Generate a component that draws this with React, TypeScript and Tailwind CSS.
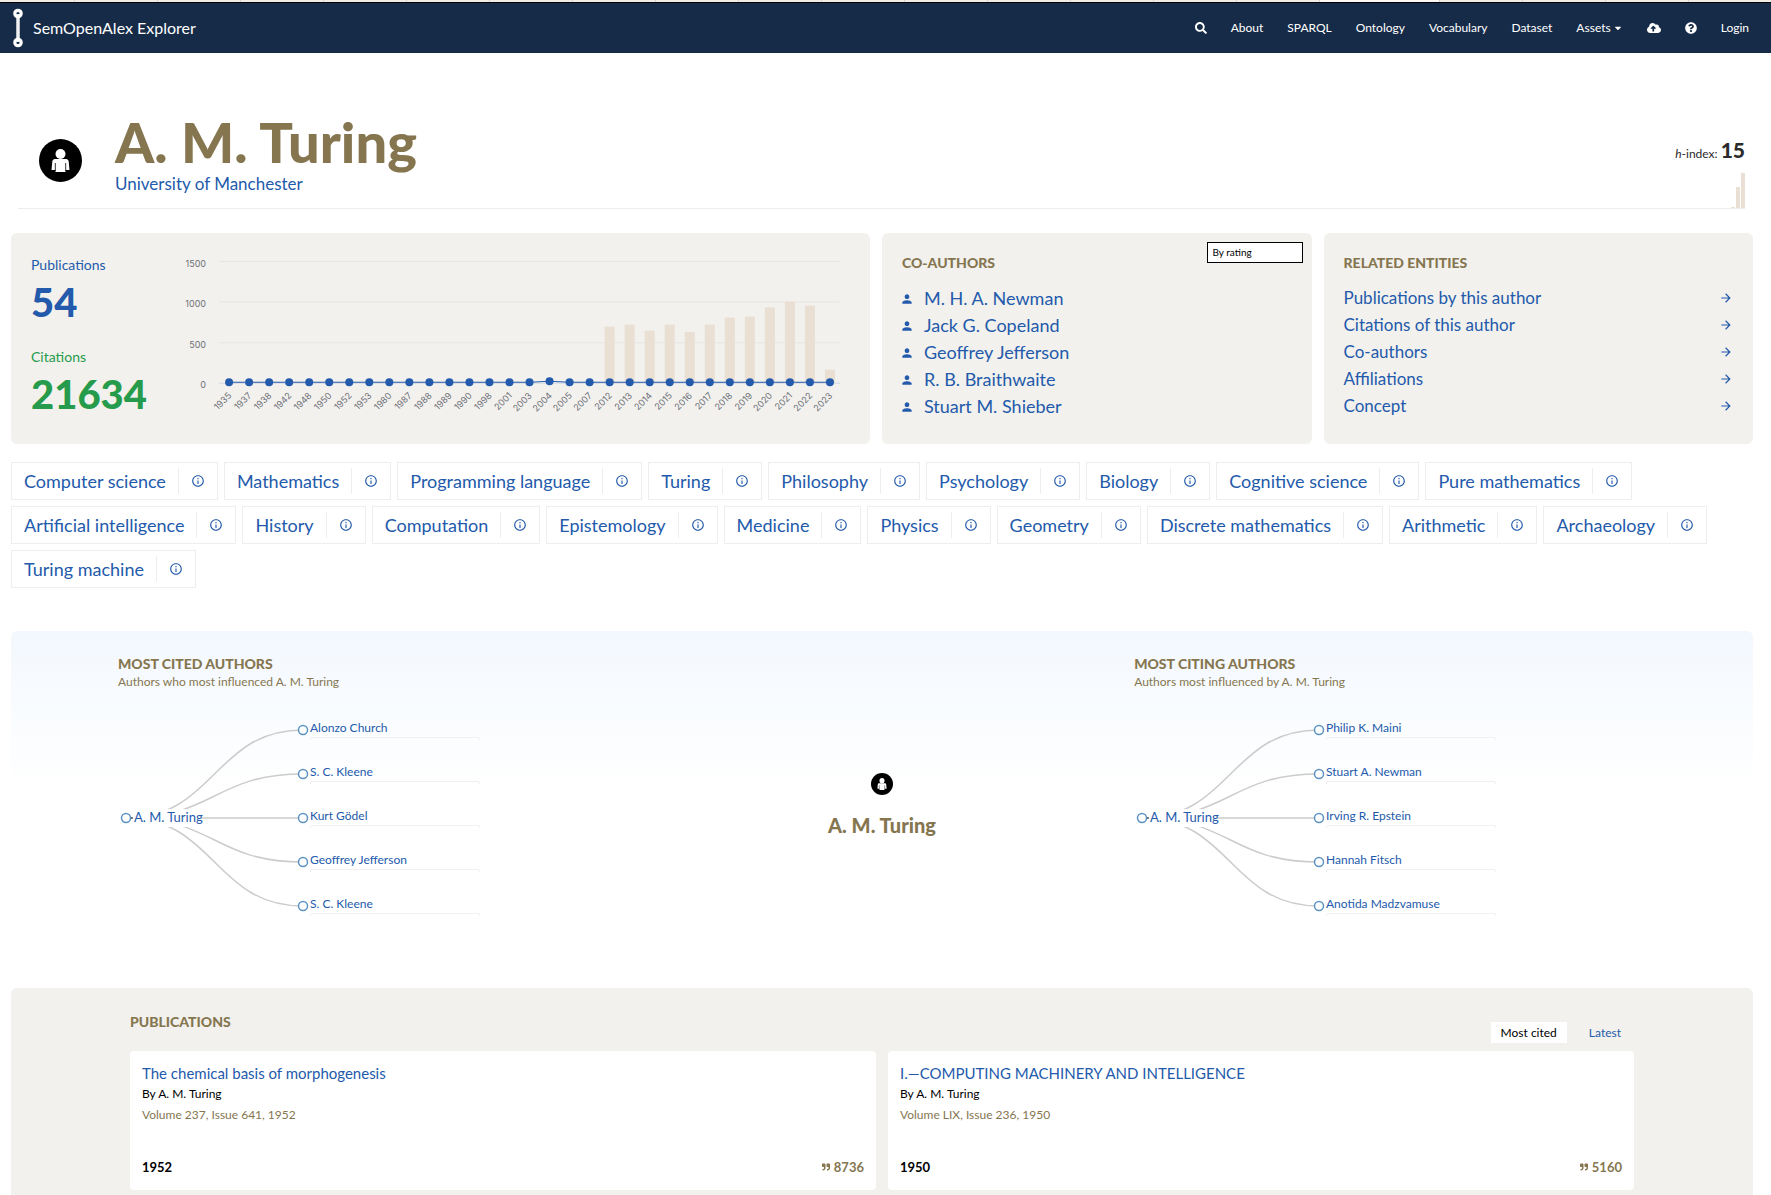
import { useState } from 'react'
import {
  FaCaretDown,
  FaCloudUploadAlt,
  FaQuestionCircle,
  FaQuoteRight,
  FaSearch,
} from 'react-icons/fa'
import { MdArrowForward, MdInfoOutline, MdPerson } from 'react-icons/md'

interface YearData {
  year: number
  publications: number
  citations: number
}

interface Publication {
  title: string
  author: string
  issue: string
  year: number
  citations: number
}

const AUTHOR = 'A. M. Turing'

const earlyYears = [
  1935, 1937, 1938, 1942, 1948, 1950, 1952, 1953, 1980, 1987, 1988, 1989, 1990,
  1998, 2001, 2003, 2004, 2005, 2007,
]
const citationsFrom2012 = [
  697, 722, 648, 722, 632, 722, 809, 821, 936, 1006, 957, 167,
]

const chartData: YearData[] = [
  ...earlyYears.map((year) => ({
    year,
    publications: year === 2004 ? 25 : 12,
    citations: 0,
  })),
  ...citationsFrom2012.map((citations, i) => ({
    year: 2012 + i,
    publications: 12,
    citations,
  })),
]

const coAuthors = [
  'M. H. A. Newman',
  'Jack G. Copeland',
  'Geoffrey Jefferson',
  'R. B. Braithwaite',
  'Stuart M. Shieber',
]

const relatedEntities = [
  'Publications by this author',
  'Citations of this author',
  'Co-authors',
  'Affiliations',
  'Concept',
]

const concepts = [
  'Computer science',
  'Mathematics',
  'Programming language',
  'Turing',
  'Philosophy',
  'Psychology',
  'Biology',
  'Cognitive science',
  'Pure mathematics',
  'Artificial intelligence',
  'History',
  'Computation',
  'Epistemology',
  'Medicine',
  'Physics',
  'Geometry',
  'Discrete mathematics',
  'Arithmetic',
  'Archaeology',
  'Turing machine',
]

const mostCited = [
  'Alonzo Church',
  'S. C. Kleene',
  'Kurt Gödel',
  'Geoffrey Jefferson',
  'S. C. Kleene',
]

const mostCiting = [
  'Philip K. Maini',
  'Stuart A. Newman',
  'Irving R. Epstein',
  'Hannah Fitsch',
  'Anotida Madzvamuse',
]

const publications: Publication[] = [
  {
    title: 'The chemical basis of morphogenesis',
    author: AUTHOR,
    issue: 'Volume 237, Issue 641, 1952',
    year: 1952,
    citations: 8736,
  },
  {
    title: 'I.—COMPUTING MACHINERY AND INTELLIGENCE',
    author: AUTHOR,
    issue: 'Volume LIX, Issue 236, 1950',
    year: 1950,
    citations: 5160,
  },
]

const PersonBadge = ({ className }: { className: string }) => (
  <svg viewBox="0 0 43 43" className={className} aria-hidden="true">
    <circle cx="21.5" cy="21.5" r="21.5" fill="#000" />
    <circle cx="21.5" cy="15" r="5" fill="#fff" />
    <path
      d="M16 20h11c1.500 0 2.500 1 2.700 2.500l.8 8.500h-4v2h-10v-2h-4l.8-8.500C13.500 21 14.500 20 16 20z"
      fill="#fff"
    />
    <path d="M16.300 24v8M26.700 24v8" stroke="#000" strokeWidth=".8" />
  </svg>
)

// Sliver of the tab strip above the navbar
const TabStrip = () => (
  <div className="flex h-0.5 bg-[#efebe7]">
    <div className="w-[75px] border-r border-[#d6d3d0]" />
    {Array.from({ length: 15 }, (_, i) => (
      <div key={i} className="flex-1 border-r border-[#d6d3d0]" />
    ))}
    <div className="w-[120px] border-r border-[#d6d3d0] bg-[#faf9f8]" />
    {Array.from({ length: 4 }, (_, i) => (
      <div key={i} className="flex-1 border-r border-[#d6d3d0] last:border-r-0" />
    ))}
  </div>
)

const Navbar = () => (
  <nav className="flex h-[51px] items-center justify-between border-t border-black bg-[#162b48] pr-[22px] pl-[13px] text-white">
    <a href="#" className="flex items-center gap-[10px] text-[16px]">
      <svg width="10" height="40" viewBox="0 0 10 40" aria-hidden="true">
        <path d="M5 6v28" stroke="#f1f1f1" strokeWidth="3.500" />
        <circle cx="5" cy="5.500" r="3.200" fill="none" stroke="#fff" strokeWidth="3.200" />
        <circle cx="5" cy="34.500" r="3.200" fill="none" stroke="#fff" strokeWidth="3.200" />
      </svg>
      SemOpenAlex Explorer
    </a>
    <div className="flex items-center gap-6 text-[12px]">
      <button aria-label="Search">
        <FaSearch size={12} />
      </button>
      <a href="#">About</a>
      <a href="#">SPARQL</a>
      <a href="#">Ontology</a>
      <a href="#">Vocabulary</a>
      <a href="#">Dataset</a>
      <button className="flex items-center gap-0.5">
        Assets
        <FaCaretDown size={10} />
      </button>
      <button aria-label="Upload">
        <FaCloudUploadAlt size={14} />
      </button>
      <button aria-label="Help">
        <FaQuestionCircle size={12} />
      </button>
      <a href="#">Login</a>
    </div>
  </nav>
)

const HistoryChart = () => {
  const left = 40
  const step = 20
  const base = 126
  const right = left + step * chartData.length
  const toY = (value: number) => base - (value * 81) / 1000
  const center = (i: number) => left + step / 2 + i * step

  return (
    <svg
      viewBox="0 0 662 170"
      className="h-auto w-full font-['Inter',sans-serif]"
      role="img"
      aria-label="Publications and citations per year"
    >
      {[0, 500, 1000, 1500].map((tick) => (
        <g key={tick}>
          <line
            x1={left}
            x2={right}
            y1={toY(tick)}
            y2={toY(tick)}
            stroke={tick === 0 ? '#d3dae6' : '#e7e6e4'}
          />
          <text
            x={left - 13}
            y={toY(tick) + 5}
            textAnchor="end"
            fill="#6e7079"
            className="text-[9px]"
          >
            {tick}
          </text>
        </g>
      ))}
      {chartData.map((d, i) => (
        <rect
          key={d.year}
          x={center(i) - 5}
          y={toY(d.citations)}
          width="10"
          height={base - toY(d.citations)}
          fill="#e9dfd3"
        />
      ))}
      <polyline
        points={chartData
          .map((d, i) => `${center(i)},${toY(d.publications)}`)
          .join(' ')}
        fill="none"
        stroke="#235aab"
      />
      {chartData.map((d, i) => (
        <g key={d.year}>
          <circle cx={center(i)} cy={toY(d.publications)} r="4" fill="#235aab" />
          <text
            x={center(i) + 3}
            y={base + 13}
            textAnchor="end"
            fill="#6e7079"
            className="text-[9px]"
            transform={`rotate(-45 ${center(i) + 3} ${base + 13})`}
          >
            {d.year}
          </text>
        </g>
      ))}
    </svg>
  )
}

const AuthorTree = ({ names }: { names: string[] }) => {
  const rootY = 104
  const childX = 185

  return (
    <svg width="370" height="210" viewBox="0 0 370 210" className="text-[12px]">
      {names.map((_, i) => {
        const y = 16 + i * 44
        return (
          <path
            key={i}
            d={`M8 ${rootY} C${childX / 2 + 4} ${rootY} ${childX / 2 + 4} ${y} ${childX} ${y}`}
            fill="none"
            stroke="#ccc"
            strokeWidth="1.500"
          />
        )
      })}
      <rect x="14" y="95" width="69" height="18" fill="#fff" />
      <path d="M12 104h3" stroke="#333" strokeWidth="1.200" />
      <circle cx="8" cy={rootY} r="4.500" fill="#fff" stroke="#5b92c4" strokeWidth="1.500" />
      <a href="#">
        <text x="16" y="108" fill="#235aab" className="text-[13px]">
          {AUTHOR}
        </text>
      </a>
      {names.map((name, i) => {
        const y = 16 + i * 44
        return (
          <g key={i}>
            <circle cx={childX} cy={y} r="4.500" fill="#fff" stroke="#5b92c4" strokeWidth="1.500" />
            <path
              d={`M192.500 ${y + 10}v-1q0 -1.500 1.500 -1.500h166q1.500 0 1.500 1.500v1`}
              fill="none"
              stroke="#f3f1ef"
            />
            <a href="#">
              <text x="192" y={y + 2} fill="#235aab">
                {name}
              </text>
            </a>
          </g>
        )
      })}
    </svg>
  )
}

const SectionTitle = ({ children }: { children: React.ReactNode }) => (
  <h2 className="text-[14px] leading-5 font-black text-[#857650]">{children}</h2>
)

const InfluenceColumn = ({
  title,
  subtitle,
  names,
}: {
  title: string
  subtitle: string
  names: string[]
}) => (
  <section className="col-span-5 pl-[107px]">
    <SectionTitle>{title}</SectionTitle>
    <p className="mb-6 text-[12px] leading-4 text-[#857650]">{subtitle}</p>
    <AuthorTree names={names} />
  </section>
)

const App: React.FC = () => {
  const [sort, setSort] = useState<'cited' | 'latest'>('cited')

  const tabClass = (active: boolean) =>
    active
      ? 'h-[21px] bg-white px-2.5 text-black'
      : 'h-[21px] px-2.5 text-[#235aab]'

  return (
    <div className="min-h-screen bg-white font-['Lato','Open_Sans',sans-serif] text-[#235aab]">
      <TabStrip />
      <Navbar />

      <header className="mr-[26px] ml-[18px] flex h-[156px] items-end justify-between border-b border-[#eeeeec]">
        <div className="flex items-end gap-[33px] pb-3.5 pl-[21px]">
          <PersonBadge className="mb-3 size-[43px]" />
          <div>
            <h1 className="text-[56px] leading-[64px] font-black text-[#857650]">
              {AUTHOR}
            </h1>
            <a href="#" className="block text-[17px] leading-5">
              University of Manchester
            </a>
          </div>
        </div>
        <div className="flex flex-col items-end gap-2">
          <p className="text-[12px] text-[#2b2b2b]">
            <i>h</i>-index: <b className="text-[21px] font-black">15</b>
          </p>
          <div className="flex h-[35px] items-end gap-px">
            <div className="h-px w-[4px] bg-[#e9dfd3]" />
            <div className="h-[21px] w-[4px] bg-[#e9dfd3]" />
            <div className="h-[35px] w-[4px] bg-[#e9dfd3]" />
          </div>
        </div>
      </header>

      <main className="mr-[18px] ml-[11px] pt-6">
        <div className="grid grid-cols-[2fr_1fr_1fr] gap-3">
          <section className="flex rounded-md bg-[#f2f1ed] pt-5 pr-7 pl-5">
            <div className="w-[148px] shrink-0">
              <p className="text-[14px] leading-6">Publications</p>
              <p className="mt-1 text-[40px] leading-[42px] font-black">54</p>
              <div className="mt-[22px] text-[#259b4b]">
                <p className="text-[14px] leading-6">Citations</p>
                <p className="mt-1 text-[40px] leading-[42px] font-black">21634</p>
              </div>
            </div>
            <div className="min-w-0 flex-1 pt-1">
              <HistoryChart />
            </div>
          </section>

          <section className="relative h-[211px] rounded-md bg-[#f2f1ed] px-5 pt-5">
            <SectionTitle>CO-AUTHORS</SectionTitle>
            <select
              aria-label="Sort co-authors"
              className="absolute top-[9px] right-[9px] h-[21px] w-24 appearance-none border border-black bg-white px-[5px] text-[10px] text-black"
            >
              <option>By rating</option>
              <option>By name</option>
            </select>
            <ul className="mt-3">
              {coAuthors.map((name) => (
                <li key={name} className="flex h-[27px] items-center gap-2.5">
                  <MdPerson size={14} className="-ml-0.5" />
                  <a href="#" className="text-[18px]">
                    {name}
                  </a>
                </li>
              ))}
            </ul>
          </section>

          <section className="rounded-md bg-[#f2f1ed] px-5 pt-5">
            <SectionTitle>RELATED ENTITIES</SectionTitle>
            <ul className="mt-[11px]">
              {relatedEntities.map((name) => (
                <li key={name}>
                  <a
                    href="#"
                    className="flex h-[27px] items-center justify-between text-[17px]"
                  >
                    {name}
                    <MdArrowForward size={14} />
                  </a>
                </li>
              ))}
            </ul>
          </section>
        </div>

        <ul className="mt-[18px] flex flex-wrap gap-1.5">
          {concepts.map((concept) => (
            <li
              key={concept}
              className="flex h-[38px] items-center border border-[#eeeeec] px-3"
            >
              <a href="#" className="pr-3 text-[18px]">
                {concept}
              </a>
              <button
                aria-label={`About ${concept}`}
                className="flex h-[26px] items-center border-l border-[#eeeeec] pl-3"
              >
                <MdInfoOutline size={14} />
              </button>
            </li>
          ))}
        </ul>

        <div className="mt-[43px] grid h-[321px] grid-cols-12 rounded-md bg-linear-to-b from-[#f3f8fe] to-white to-50% pt-[23px]">
          <InfluenceColumn
            title="MOST CITED AUTHORS"
            subtitle={`Authors who most influenced ${AUTHOR}`}
            names={mostCited}
          />
          <div className="col-span-2 flex flex-col items-center gap-[18px] pt-[119px]">
            <PersonBadge className="size-[22px]" />
            <p className="text-[20px] leading-6 font-black text-[#857650]">{AUTHOR}</p>
          </div>
          <InfluenceColumn
            title="MOST CITING AUTHORS"
            subtitle={`Authors most influenced by ${AUTHOR}`}
            names={mostCiting}
          />
        </div>

        <section className="mt-9 rounded-t-md bg-[#f2f1ed] px-[119px] pt-6 pb-[5px]">
          <div className="flex h-[31px] items-start justify-between">
            <SectionTitle>PUBLICATIONS</SectionTitle>
            <div className="flex gap-3 self-end pr-[3px] text-[12px]">
              <button
                className={tabClass(sort === 'cited')}
                onClick={() => setSort('cited')}
              >
                Most cited
              </button>
              <button
                className={tabClass(sort === 'latest')}
                onClick={() => setSort('latest')}
              >
                Latest
              </button>
            </div>
          </div>
          <div className="mt-2 grid grid-cols-2 gap-3">
            {publications.map((publication) => (
              <article
                key={publication.title}
                className="flex h-[139px] flex-col rounded bg-white px-3 pt-[11px] pb-3"
              >
                <a href="#" className="text-[15px] leading-[22px]">
                  {publication.title}
                </a>
                <p className="text-[12px] leading-5 text-black">By {publication.author}</p>
                <p className="text-[12px] leading-[22px] text-[#857650]">
                  {publication.issue}
                </p>
                <div className="mt-auto flex items-center justify-between text-[13px] leading-[22px] font-bold">
                  <span className="text-black">{publication.year}</span>
                  <span className="flex items-center gap-1 text-[#857650]">
                    <FaQuoteRight size={8} />
                    {publication.citations}
                  </span>
                </div>
              </article>
            ))}
          </div>
        </section>
      </main>
    </div>
  )
}

export default App
